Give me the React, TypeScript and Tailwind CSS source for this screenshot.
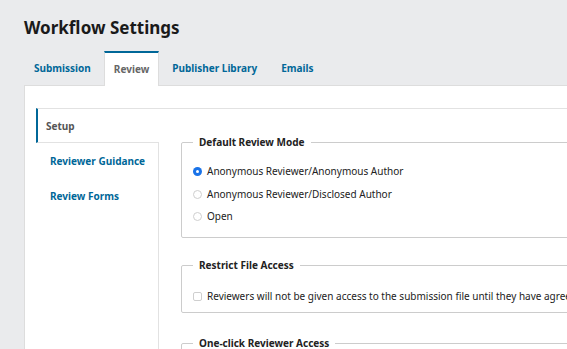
import React from "react";

const tabs = ["Submission", "Review", "Publisher Library", "Emails"];

function Radio({ checked, label }: { checked?: boolean; label: string }) {
  return (
    <label className="flex h-[22.8px] items-center gap-[5px]">
      {checked ? (
        <span className="flex h-[9px] w-[9px] items-center justify-center rounded-full bg-[#1a73e8]">
          <span className="h-[3px] w-[3px] rounded-full bg-white" />
        </span>
      ) : (
        <span className="h-[9px] w-[9px] rounded-full border border-[#cfcfcf] bg-white" />
      )}
      <span>{label}</span>
    </label>
  );
}

function Group({ legend, children, className }: { legend: string; children: React.ReactNode; className?: string }) {
  return (
    <fieldset className={"w-[560px] rounded-[2px] border border-[#cccccc] pl-[11px] " + (className ?? "")}>
      <legend className="px-[6px] text-[10px] font-bold leading-[16px] text-[#222]">{legend}</legend>
      {children}
    </fieldset>
  );
}

export default function App() {
  return (
    <div
      className="h-screen w-screen overflow-hidden bg-[#eaebed] text-[#222]"
      style={{ fontFamily: '"Noto Sans", sans-serif' }}
    >
      <h1 className="pl-6 pt-[16px] text-[17px] font-bold leading-[24px] text-[#1a1a1a]">Workflow Settings</h1>

      <div className="mt-[11px] flex pl-[21px]">
        {tabs.map((t) =>
          t === "Review" ? (
            <div
              key={t}
              className="relative z-10 -mb-px flex h-[35px] items-center border-x border-t-2 border-x-[#dddddd] border-t-[#006798] bg-white px-[9px] text-[10px] font-bold text-[#666]"
            >
              {t}
            </div>
          ) : (
            <div key={t} className="flex h-[34px] items-center px-[13px] text-[10px] font-bold text-[#006798] last:pl-[11px]">
              {t}
            </div>
          )
        )}
      </div>

      <div className="ml-6 flex h-full border-l border-t border-[#dddddd] bg-white pl-[11px] pt-[22px]">
        <div className="flex w-[123px] shrink-0 flex-col">
          <div className="flex h-[35px] items-center border-y border-l-2 border-y-[#e2e2e2] border-l-[#006798] pl-[8px] pt-[2px] text-[10px] font-bold text-[#555]">
            Setup
          </div>
          <div className="flex flex-1 flex-col border-r border-[#e2e2e2] pl-[14px] text-[10px] font-bold text-[#006798]">
            <div className="flex h-[35px] items-center pt-[1px]">Reviewer Guidance</div>
            <div className="flex h-[35px] items-center pt-[1px]">Review Forms</div>
          </div>
        </div>

        <div className="flex-1 border-t border-[#e2e2e2] pl-[22px] pt-[25px] text-[10px]">
          <Group legend="Default Review Mode" className="pb-[9px] pt-[10px]">
            <Radio checked label="Anonymous Reviewer/Anonymous Author" />
            <Radio label="Anonymous Reviewer/Disclosed Author" />
            <Radio label="Open" />
          </Group>

          <Group legend="Restrict File Access" className="mt-[19px] pb-[5px] pt-[12px]">
            <label className="flex h-[22px] items-center gap-[5px] whitespace-nowrap">
              <span className="h-[9px] w-[9px] shrink-0 rounded-[2px] border border-[#cfcfcf] bg-white" />
              <span>Reviewers will not be given access to the submission file until they have agreed to review it.</span>
            </label>
          </Group>

          <Group legend="One-click Reviewer Access" className="mt-[22px] pb-[10px] pt-[10px]">
            <div className="h-[40px]" />
          </Group>
        </div>
      </div>
    </div>
  );
}
